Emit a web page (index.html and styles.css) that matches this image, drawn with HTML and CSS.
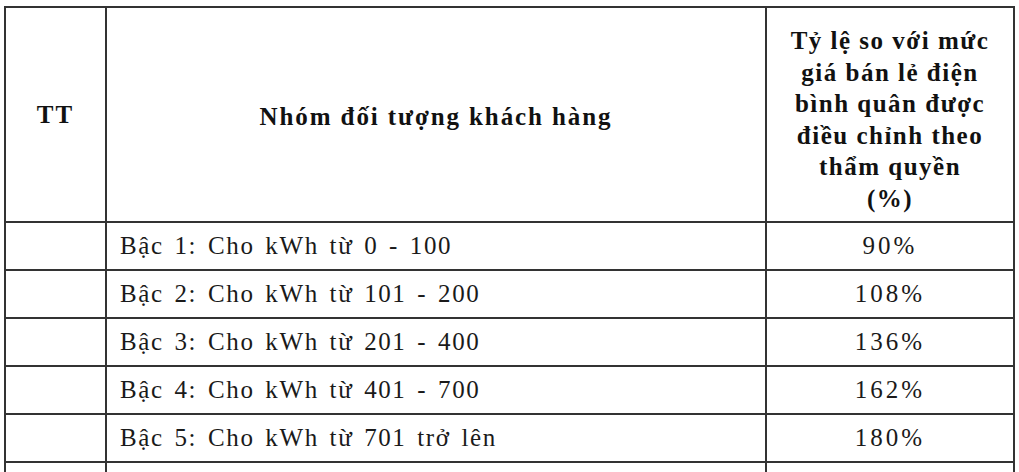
FILE: index.html
```html
<!DOCTYPE html>
<html lang="vi">
<head>
<meta charset="utf-8">
<link rel="stylesheet" href="styles.css">
</head>
<body>
<div class="wrap">
<table class="tbl">
  <colgroup>
    <col class="c1">
    <col class="c2">
    <col class="c3">
  </colgroup>
  <thead>
    <tr class="head">
      <th>TT</th>
      <th class="group">Nhóm đối tượng khách hàng</th>
      <th class="rate">
        <span class="ln">Tỷ lệ so với mức</span>
        <span class="ln">giá bán lẻ điện</span>
        <span class="ln">bình quân được</span>
        <span class="ln">điều chỉnh theo</span>
        <span class="ln">thẩm quyền</span>
        <span class="ln">(%)</span>
      </th>
    </tr>
  </thead>
  <tbody>
    <tr><td></td><td class="name">Bậc 1: Cho kWh từ 0 - 100</td><td class="val">90%</td></tr>
    <tr><td></td><td class="name">Bậc 2: Cho kWh từ 101 - 200</td><td class="val">108%</td></tr>
    <tr><td></td><td class="name">Bậc 3: Cho kWh từ 201 - 400</td><td class="val">136%</td></tr>
    <tr><td></td><td class="name">Bậc 4: Cho kWh từ 401 - 700</td><td class="val">162%</td></tr>
    <tr><td></td><td class="name">Bậc 5: Cho kWh từ 701 trở lên</td><td class="val">180%</td></tr>
    <tr><td></td><td class="name">&nbsp;</td><td class="val">&nbsp;</td></tr>
  </tbody>
</table>
</div>
</body>
</html>
```

FILE: styles.css
```css
html, body {
  margin: 0;
  padding: 0;
  background: #ffffff;
  overflow: hidden;
}
body {
  font-family: "Liberation Serif", "Times New Roman", serif;
  color: #1a1a1a;
}
.wrap {
  padding: 6px 0 0 4px;
}
.tbl {
  border-collapse: collapse;
  table-layout: fixed;
  width: 1009px;
}
.c1 { width: 101px; }
.c2 { width: 660px; }
.c3 { width: 248px; }
.tbl th, .tbl td {
  border: 2px solid #333333;
  padding: 0;
}
.head th {
  height: 203px;
  font-weight: bold;
  font-size: 25px;
  text-align: center;
  vertical-align: middle;
  color: #111111;
  letter-spacing: 2px;
}
.head th.group {
  letter-spacing: 1.9px;
  padding-top: 4px;
}
.head th.rate {
  line-height: 31.5px;
  letter-spacing: 1.5px;
  padding: 10px 0 0;
  white-space: nowrap;
}
.ln {
  display: block;
}
.tbl td {
  height: 46px;
  font-size: 25px;
  vertical-align: middle;
}
.tbl td.name {
  padding-left: 13px;
  letter-spacing: 1.6px;
  word-spacing: 3px;
}
.tbl td.val {
  text-align: center;
  letter-spacing: 3px;
}
```
